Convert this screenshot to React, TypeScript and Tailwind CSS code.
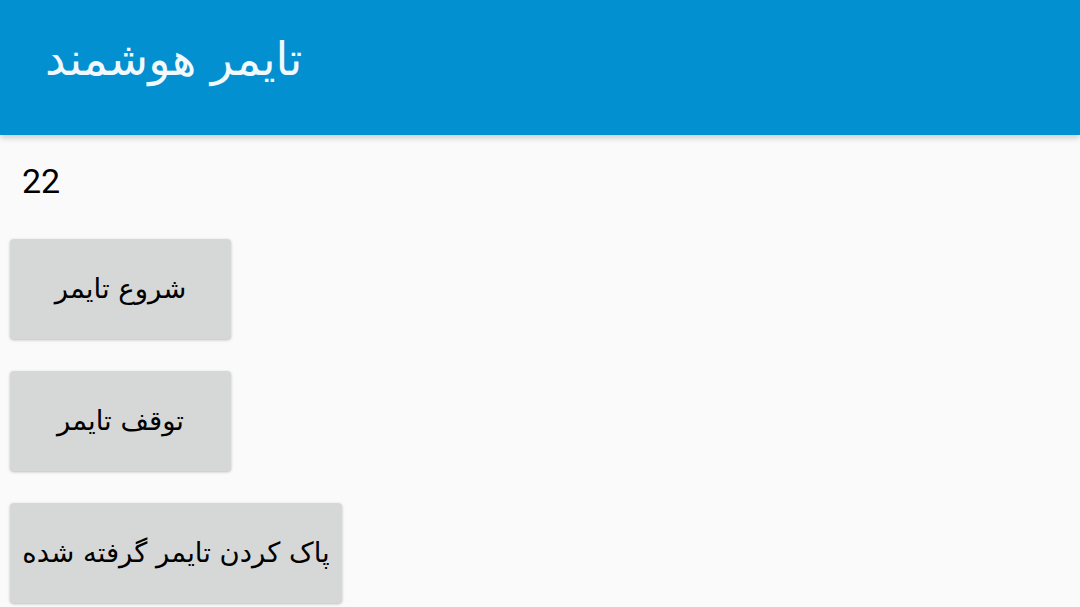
export default function App() {
  const buttons = [
    { label: "شروع تایمر", width: "w-[221px]" },
    { label: "توقف تایمر", width: "w-[221px]" },
    { label: "پاک کردن تایمر گرفته شده", width: "w-[332px]" },
  ]

  return (
    <div className="w-[1080px] h-[607px] overflow-hidden bg-[#fafafa] font-['DejaVu_Sans',sans-serif]">
      <header className="relative z-10 h-[135px] bg-[#0290d0] shadow-[0_3px_6px_rgba(0,0,0,0.18)] flex items-center pl-[45px]">
        <h1 dir="rtl" className="text-[46px] leading-none text-[#f2f9fd] pb-[18px]">
          تایمر هوشمند
        </h1>
      </header>

      <div className="pl-[10px]">
        <p className="pl-[12px] pt-[26px] h-[104px] text-[34px] leading-[40px] text-black font-['Roboto',sans-serif]">
          22
        </p>
        <div className="flex flex-col gap-[32px]">
          {buttons.map((b) => (
            <button
              key={b.label}
              dir="rtl"
              className={`${b.width} h-[100px] rounded-[4px] bg-[#d6d7d7] shadow-[0_1px_3px_rgba(0,0,0,0.25)] text-[27.5px] text-black flex items-center justify-center`}
            >
              {b.label}
            </button>
          ))}
        </div>
      </div>
    </div>
  )
}
